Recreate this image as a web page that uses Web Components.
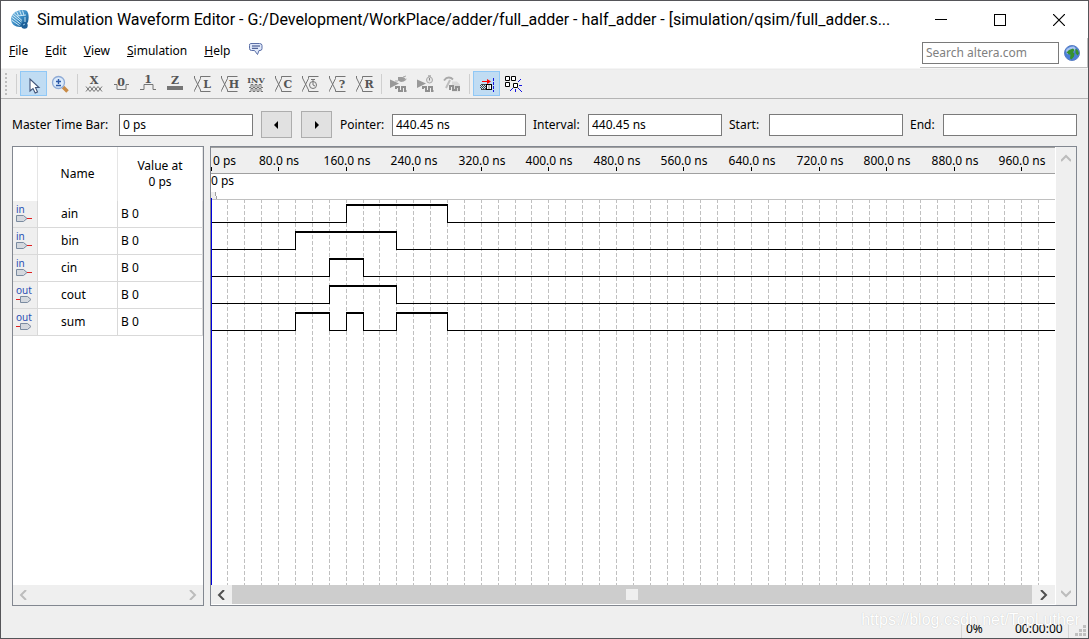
<!DOCTYPE html>
<html lang="en">
<head>
<meta charset="utf-8">
<title>Simulation Waveform Editor</title>
<style>
  html, body { margin: 0; background: #efefef; }
</style>
</head>
<body>
<wave-window></wave-window>
<script>
const define = (name, html, setup) => {
  const template = document.createElement('template');
  template.innerHTML = html;
  customElements.define(name, class extends HTMLElement {
    constructor() {
      super();
      this.attachShadow({ mode: 'open' }).append(template.content.cloneNode(true));
    }
    connectedCallback() {
      if (setup && !this.ready) { this.ready = true; setup(this, this.shadowRoot); }
    }
  });
};

/* Title bar */
define('title-bar', `
<style>
  :host { display: flex; align-items: center; height: 37px; background: #fff; padding-left: 9px; }
  .logo { flex: none; margin-right: 7px; }
  h1 { flex: 1; margin: 0; min-width: 0; font: 16px/24px Roboto, sans-serif; color: #000; white-space: nowrap; overflow: hidden; text-overflow: clip; }
  button { flex: none; width: 59px; height: 36px; padding: 0; border: 0; background: none; }
  svg { display: block; margin: auto; }
</style>
<svg class="logo" width="20" height="20" viewBox="0 0 20 20">
  <defs><linearGradient id="g" x1="0" y1="0" x2="1" y2="1"><stop offset="0" stop-color="#8cc4e6"/><stop offset=".5" stop-color="#3b8dc6"/><stop offset="1" stop-color="#0c4a80"/></linearGradient></defs>
  <path d="M4 3C7 0 14-1 17 1c2 3 2 7 1 11l-3 4-5 1C5 17 1 14 1 9c0-2 1-4 3-6z" fill="url(#g)"/>
  <path d="M1.500 7l9 7M2.500 5l9 7M4 3.500l8 7M1.500 10l8 5.500M6.500 1.500l2 4M9.500 .5l2 5M12.500 .5l1.500 5M7 6l9-1M15 7v5" fill="none" stroke="#d9f0fb" stroke-width=".9"/>
  <circle cx="14.500" cy="15.500" r="3.200" fill="#1d5f98"/><path d="M13 15l2-1" stroke="#9fd0ee"/>
</svg>
<h1><slot></slot></h1>
<button aria-label="Minimize"><svg width="12" height="12"><path d="M0 5.500h12" stroke="#000"/></svg></button>
<button aria-label="Maximize"><svg width="12" height="12"><rect x=".5" y=".5" width="11" height="11" fill="none" stroke="#000"/></svg></button>
<button aria-label="Close"><svg width="12" height="12"><path d="M0 0l12 12M12 0L0 12" stroke="#000" stroke-width="1.200"/></svg></button>
`);

/* Menu bar with the site search */
define('menu-bar', `
<style>
  :host { display: flex; height: 30px; background: #fff; border-bottom: 1px solid #f5f5f5; }
  nav { display: flex; align-items: center; flex: 1; gap: 17px; padding: 0 0 5px 8px; }
  nav a { color: #000; text-decoration: none; white-space: nowrap; line-height: 20px; }
  nav svg { margin-bottom: 4px; }
  form { display: flex; align-items: center; box-sizing: border-box; width: 168px; padding: 0 7px 0 2px; gap: 5px; border-right: 1px solid #c0c0c0; border-bottom: 1px solid #c0c0c0; }
  input { box-sizing: border-box; flex: 1; min-width: 0; height: 22px; padding: 0 3px; border: 1px solid #7a7a7a; border-radius: 0; background: #fff; font: inherit; }
  input::placeholder { color: #808080; opacity: 1; }
  button { padding: 0; border: 0; background: none; width: 16px; height: 16px; }
  svg { display: block; }
</style>
<nav aria-label="Main menu">
  <a href="#file"><u>F</u>ile</a><a href="#edit"><u>E</u>dit</a><a href="#view"><u>V</u>iew</a><a href="#simulation"><u>S</u>imulation</a><a href="#help"><u>H</u>elp</a>
  <svg width="16" height="14" viewBox="0 0 16 14"><path d="M3.500 1.500h9q2.500 0 2.500 2v3q0 2-2 2h-1l-1.500 4-3-4H4.500q-2 0-2-2v-3q0-2 1-2z" fill="#dfe8fa" stroke="#5a6ea6"/><path d="M5 4h8M5 6.300h6" stroke="#2f4380"/></svg>
</nav>
<form role="search">
  <input type="text" aria-label="Search altera.com" placeholder="Search altera.com">
  <button type="button" aria-label="Search the web site">
    <svg width="16" height="16" viewBox="0 0 16 16"><circle cx="8" cy="8" r="7.500" fill="#4a7fd6" stroke="#5b7fc4"/><path d="M2 5q3-4 8-3.500l2 2-2 3-4 0-3 3z" fill="#a9c4f2"/><path d="M2.500 7.500L5 5l4-1.500 1.500 1.500-1.500 2.500 1.500 1-.5 3-2.500 3-1.500-1 .5-4-1.500 0zM11.500 3.500l2.500 2 1 3-1.500 2-2-2.500z" fill="#37912f"/></svg>
  </button>
</form>
`);

/* Tool bar */
const letterIcon = (t, extra = '') =>
  `<svg><path d="M5.500 5v2l6 12v1.500h10M5.500 20.500v-1l6-12v-2h10" class="l"/>${t ? `<text x="18" y="17" class="t">${t}</text>` : ''}${extra}</svg>`;
const tools = [
  ['Selection Tool', '<svg><path d="M10 8l0 12 3-2.500 2.200 4.500 2.300-1-2-4.500 3.500 0z" fill="#fff" stroke="#42557a" stroke-width="1.100"/></svg>', 'on'],
  ['Zoom Tool', '<svg><path d="M16 16l4.500 4.500" stroke="#c98b46" stroke-width="3.500"/><circle cx="11.500" cy="11.500" r="6" fill="#dcebfb" stroke="#8fabd6" stroke-width="1.300"/><path d="M9 10.500h5M11.500 8v5M9 14.500h5" stroke="#2c59a8" stroke-width="1.400"/></svg>'],
  null,
  ['Forcing Unknown', '<svg><path d="M5 15.500l4 5 4-5 4 5 4-5M5 20.500l4-5 4 5 4-5 4 5" class="l"/><text x="13" y="13" class="t">X</text></svg>'],
  ['Forcing Low', '<svg><path d="M6 13.500h3v5h9v-5h3" class="l"/><text x="13" y="15" class="t">0</text></svg>'],
  ['Forcing High', '<svg><path d="M5 18.500h4v-5h9v5h3" class="l"/><text x="13" y="12" class="t">1</text></svg>'],
  ['High Impedance', '<svg><rect x="5" y="15" width="16" height="4" fill="#757575"/><text x="13" y="13" class="t">Z</text></svg>'],
  ['Weak Low', letterIcon('L')],
  ['Weak High', letterIcon('H')],
  ['Invert', '<svg><text x="13" y="12" class="t s">INV</text><path d="M6 16.500h2v-3h2v3h2v-3h2v3h2v-3h2v3h2M6 20.500h2v-3h2v3h2v-3h2v3h2v-3h2v3h2" class="l"/></svg>'],
  ['Count Value', letterIcon('C')],
  ['Overwrite Clock', letterIcon('', '<circle cx="16" cy="14" r="3.500" fill="#efefef" stroke="#757575"/><path d="M14 8.500h4M16 9v5l2 1" class="l"/>')],
  ['Arbitrary Value', letterIcon('?')],
  ['Random Values', letterIcon('R')],
  null,
  ['Run Functional Simulation', '<svg><path d="M5 8.500l9 4-9 4.500z" fill="#999"/><path d="M10 10h3" stroke="#aaa"/><path d="M13 6h4q3 0 4 3-2 2-5 2l-3-1.500z" fill="#9c9c9c"/><path d="M18 6l3-1M19 9l2.500-1" stroke="#aaa"/><path d="M11 18v-2h3v4h3v-4h3v4h1.500" class="w"/></svg>'],
  ['Run Timing Simulation', '<svg><path d="M5 8.500l9 4-9 4.500z" fill="#999"/><circle cx="17.500" cy="9" r="3" fill="#e4e4e4" stroke="#a9a9a9"/><path d="M17.500 7v2.500M16 5h3" stroke="#888" fill="none"/><path d="M11 18v-2h3v4h3v-4h3v4h1.500" class="w"/></svg>'],
  ['Generate Testbench', '<svg><path d="M5 9.500q3-4 7-2.500l2 1.500" stroke="#a9a9a9" stroke-width="2" fill="none"/><path d="M11 9l-4 8" stroke="#bdbdbd" stroke-width="2"/><path d="M13 10.500h5l3 3v7h-8z" fill="#dadada"/><path d="M11 19v-4h3v4h3v-3h3v4" class="w"/></svg>'],
  null,
  ['Snap to Transition', '<svg><path d="M9 10.500h6" stroke="red"/><path d="M14 8l4 2.500-4 2.500z" fill="red"/><path d="M8 13.500h5M8 18.500h5" stroke="#444"/><path d="M7 14.500h6M7 16.500h6" stroke="#444" stroke-dasharray="1 1"/><path d="M8 15.500h5M8 17.500h5" stroke="#444" stroke-dasharray="1 1"/><rect x="13.500" y="13.500" width="5" height="5" fill="#fff" stroke="#000"/><path d="M16 14v4" stroke="#888"/><path d="M20.500 7v14" stroke="#1414e0" stroke-dasharray="3 1"/></svg>', 'on'],
  ['Snap to Grid', '<svg><path d="M5.500 5.500h4v4h-4zM11.500 5.500h4v4h-4zM5.500 11.500h4v4h-4zM13.500 12.500h4v4h-4z" fill="#fff" stroke="#000"/><path d="M18 11l3-3M19 14.500h3M18 17l4 4M15.500 18v3M13 17l-3 3" stroke="#1414e0"/></svg>'],
];
define('tool-bar', `
<style>
  :host { display: flex; align-items: flex-start; height: 27px; padding: 1px 0 0 4px; background: #efefef; border-bottom: 1px solid #b4b4b4; border-top: 1px solid #ebebeb; }
  .grip { width: 2px; height: 22px; margin-top: 2px; background: repeating-linear-gradient(#bdbdbd 0 2px, transparent 2px 4px); margin-right: 6px; }
  .sep { width: 1px; height: 20px; margin: 3px 3px; background: #cfcfcf; }
  button { box-sizing: border-box; width: 27px; height: 25px; padding: 0; border: 0; background: none; }
  button.on { background: #c0dcf3; box-shadow: inset 0 0 0 1px #90c8f6; }
  svg { display: block; width: 26px; height: 25px; }
  .l { fill: none; stroke: #757575; stroke-width: 1; }
  .w { fill: none; stroke: #8f8f8f; stroke-width: 2; }
  .t { font: bold 11px "DejaVu Serif", serif; fill: #555; text-anchor: middle; }
  .s { font-size: 8px; }
</style>
<div class="grip"></div><div class="sep"></div>
`, (el, root) => {
  for (const tool of tools) {
    const node = document.createElement(tool ? 'button' : 'div');
    if (tool) {
      node.setAttribute('aria-label', tool[0]);
      node.innerHTML = tool[1];
      node.className = tool[2] || '';
    } else node.className = 'sep';
    root.append(node);
  }
});

/* Labelled read-out box */
define('time-field', `
<style>
  :host { display: flex; flex: 1; align-items: center; gap: 8px; }
  label { flex: none; line-height: 20px; white-space: nowrap; }
  input { box-sizing: border-box; flex: 1; width: 0; min-width: 0; height: 22px; padding: 0 3px; border: 1px solid #7a7a7a; border-radius: 0; background: #fff; font: inherit; color: #000; }
</style>
<label for="box"></label><input id="box" type="text">
`, (el, root) => {
  const label = root.querySelector('label');
  label.textContent = el.getAttribute('label');
  label.style.width = el.getAttribute('label-width') + 'px';
  el.style.flexBasis = (+el.getAttribute('label-width') + 8) + 'px';
  root.querySelector('input').value = el.getAttribute('value') || '';
});
define('time-bar', `
<style>
  :host { display: flex; align-items: center; gap: 7px; padding: 12px 11px 8px; }
  .step { display: flex; flex: none; gap: 9px; padding: 0 1px; }
  button { width: 31px; height: 27px; padding: 0; border: 1px solid #adadad; background: #e1e1e1; }
  svg { display: block; margin: auto; }
</style>
<time-field label="Master Time Bar:" label-width="99" value="0 ps"></time-field>
<div class="step">
  <button aria-label="Previous transition"><svg width="9" height="8"><path d="M6 0v8L2 4z"/></svg></button>
  <button aria-label="Next transition"><svg width="9" height="8"><path d="M3 0v8l4-4z"/></svg></button>
</div>
<time-field label="Pointer:" label-width="44" value="440.45 ns"></time-field>
<time-field label="Interval:" label-width="47" value="440.45 ns"></time-field>
<time-field label="Start:" label-width="32"></time-field>
<time-field label="End:" label-width="25"></time-field>
`);

/* Signal list */
const pin = dir => `
<svg width="18" height="24" viewBox="0 0 18 24">
  <text x="0" y="11">${dir}</text>
  ${dir === 'in'
    ? '<path d="M11 16.500h5" stroke="#e02020"/><path d="M.5 13.500h7l3.500 3-3.500 3h-7z" fill="#d4d8de" stroke="#7a8ba0"/>'
    : '<path d="M0 16.500h4" stroke="#e02020"/><path d="M4.500 13.500h7l3.500 3-3.500 3h-7z" fill="#d4d8de" stroke="#7a8ba0"/>'}
</svg>`;
define('signal-list', `
<style>
  :host { display: flex; flex-direction: column; box-sizing: border-box; flex: none; width: 192px; background: #fff; border: 1px solid #828790; }
  .list { flex: 1; }
  table { width: 100%; border-collapse: separate; border-spacing: 0; table-layout: fixed; }
  th, td { box-sizing: border-box; padding: 0; font-weight: normal; text-align: left; border-right: 1px solid #d9d9d9; line-height: 16px; }
  th { height: 54px; text-align: center; border-right-color: #e5e5e5; }
  td { height: 27px; border-bottom: 1px solid #d9d9d9; }
  .pin { width: 25px; } .name { width: 80px; }
  td.pin { background: #efefef; padding: 1px 0 1px 3px; vertical-align: top; }
  td.name { padding-left: 23px; }
  td.value { padding-left: 3px; }
  svg { display: block; }
  text { font: 10px "Noto Sans", sans-serif; fill: #2b50b4; }
  .bar { display: flex; justify-content: space-between; align-items: center; height: 20px; padding: 0 6px; background: #efefef; }
</style>
<div class="list"><table>
  <thead><tr><th class="pin"></th><th class="name">Name</th><th class="value">Value at<br>0 ps</th></tr></thead>
  <tbody></tbody>
</table></div>
<div class="bar">
  <svg width="8" height="10"><path d="M7 0L2 5l5 5" fill="none" stroke="#bcbcbc" stroke-width="2"/></svg>
  <svg width="8" height="10"><path d="M1 0l5 5-5 5" fill="none" stroke="#bcbcbc" stroke-width="2"/></svg>
</div>
`, (el, root) => {
  root.querySelector('tbody').innerHTML = signals.map(s =>
    `<tr><td class="pin">${pin(s.dir)}</td><td class="name">${s.name}</td><td class="value">B 0</td></tr>`).join('');
});

/* Signals: high intervals in nanoseconds */
const signals = [
  { name: 'ain', dir: 'in', high: [[160, 280]] },
  { name: 'bin', dir: 'in', high: [[100, 220]] },
  { name: 'cin', dir: 'in', high: [[140, 180]] },
  { name: 'cout', dir: 'out', high: [[140, 220]] },
  { name: 'sum', dir: 'out', high: [[100, 140], [160, 180], [220, 280]] },
];

/* Waveform canvas with its ruler and scroll bars */
define('wave-view', `
<style>
  :host { display: flex; box-sizing: border-box; flex: 1; min-width: 0; background: #fff; border: 1px solid #828790; }
  .main { display: flex; flex-direction: column; flex: 1; min-width: 0; margin-right: 1px; }
  .canvas { display: block; flex: 1 1 0; width: 100%; min-height: 240px; }
  text { font: 12px "Noto Sans", sans-serif; fill: #000; }
  .h { display: flex; align-items: center; height: 19px; margin-bottom: 1px; background: #efefef; }
  .h svg { flex: none; padding: 0 7px 0 6px; }
  .track { display: flex; align-items: center; justify-content: center; flex: 1; height: 19px; background: #cdcdcd; }
  .thumb { width: 12px; height: 11px; background: #efefef; }
  .v { display: flex; flex-direction: column; justify-content: space-between; align-items: center; box-sizing: border-box; width: 20px; padding: 7px 0; background: #efefef; }
</style>
<div class="main">
  <svg class="canvas"></svg>
  <div class="h">
    <svg width="8" height="10"><path d="M7 0L2 5l5 5" fill="none" stroke="#505050" stroke-width="2"/></svg>
    <div class="track"><div class="thumb"></div></div>
    <svg width="10" height="10"><path d="M3 0l5 5-5 5" fill="none" stroke="#505050" stroke-width="2"/></svg>
  </div>
</div>
<div class="v">
  <svg width="10" height="8"><path d="M0 7l5-5 5 5" fill="none" stroke="#bcbcbc" stroke-width="2"/></svg>
  <svg width="10" height="8"><path d="M0 1l5 5 5-5" fill="none" stroke="#bcbcbc" stroke-width="2"/></svg>
</div>
`, (el, root) => {
  const px = ns => Math.floor(ns * 0.8446);
  const rect = (x, y, w, h, fill) => `<rect x="${x}" y="${y}" width="${w}" height="${h}" fill="${fill}"/>`;
  let out = rect(0, 0, '100%', 26, '#efefef') + rect(0, 0, '100%', 1, '#a0a0a0') +
    rect(0, 26, '100%', 1, '#a0a0a0') + rect(0, 52, '100%', 1, '#c0c0c0');
  out += '<text x="2" y="18">0 ps</text><text x="0" y="38">0 ps</text>';
  out += rect(0, 20, 1, 4, '#000');
  const end = 981;
  for (let t = 20; t < end; t += 20)
    out += `<path d="M${px(t)}.500 52V3000" stroke="#c0c0c0" stroke-dasharray="4 2"/>`;
  for (let t = 80; t < end; t += 80)
    out += rect(px(t), 20, 1, 4, '#000') + `<text x="${px(t) + 1}" y="18" text-anchor="middle">${t}.0 ns</text>`;
  signals.forEach((s, i) => {
    const top = 57 + 27 * i, low = top + 18;
    let from = 0;
    for (const [a, b] of s.high) {
      out += rect(from, low, px(a) - from + 1, 1, '#000') + rect(px(a), top, px(b) - px(a) + 1, 2, '#000') +
        rect(px(a), top, 1, 19, '#000') + rect(px(b), top, 1, 19, '#000');
      from = px(b);
    }
    out += `<path d="M${from} ${low}.500H9000" stroke="#000"/>`;
  });
  out += '<path d="M0 45h4v4l2 3H0z" fill="#efefef"/><path d="M4.500 45v4M5.500 49v3" stroke="#a0a0a0"/>';
  out += rect(0, 51, 1, '100%', '#0000e0');
  root.querySelector('.canvas').innerHTML = out;
});

/* Status bar */
define('status-bar', `
<style>
  :host { display: flex; position: relative; justify-content: flex-end; align-items: flex-end; height: 32px; }
  span { box-sizing: border-box; height: 18px; line-height: 18px; }
  .pct { width: 48px; padding-left: 4px; border-left: 1px solid #d5d5d5; }
  .time { width: 60px; padding-left: 6px; border-right: 1px solid #d5d5d5; }
  svg { display: block; margin: 0 2px 2px 6px; }
  .mark { position: absolute; right: 8px; top: 4px; height: 20px; font: 16px/20px "Liberation Sans", sans-serif; color: #fff; text-shadow: 0 0 1px #bbb; white-space: nowrap; }
</style>
<span class="mark">https://blog.csdn.net/TopLuther</span>
<span class="pct">0%</span><span class="time">00:00:00</span>
<svg width="11" height="11"><path d="M8 0h3v3H8zM4 4h3v3H4zM8 4h3v3H8zM0 8h3v3H0zM4 8h3v3H4zM8 8h3v3H8z" fill="#c0c0c0"/></svg>
`);

define('wave-window', `
<style>
  :host { display: flex; flex-direction: column; box-sizing: border-box; min-height: 100vh; border: 1px solid #555559; background: #efefef; color: #000; font: 12px/16px "Noto Sans", sans-serif; }
  main { display: flex; flex: 1; gap: 6px; padding: 0 11px; }
</style>
<title-bar>Simulation Waveform Editor - G:/Development/WorkPlace/adder/full_adder - half_adder - [simulation/qsim/full_adder.s...</title-bar>
<menu-bar></menu-bar>
<tool-bar></tool-bar>
<time-bar></time-bar>
<main><signal-list></signal-list><wave-view></wave-view></main>
<status-bar></status-bar>
`);
</script>
</body>
</html>
